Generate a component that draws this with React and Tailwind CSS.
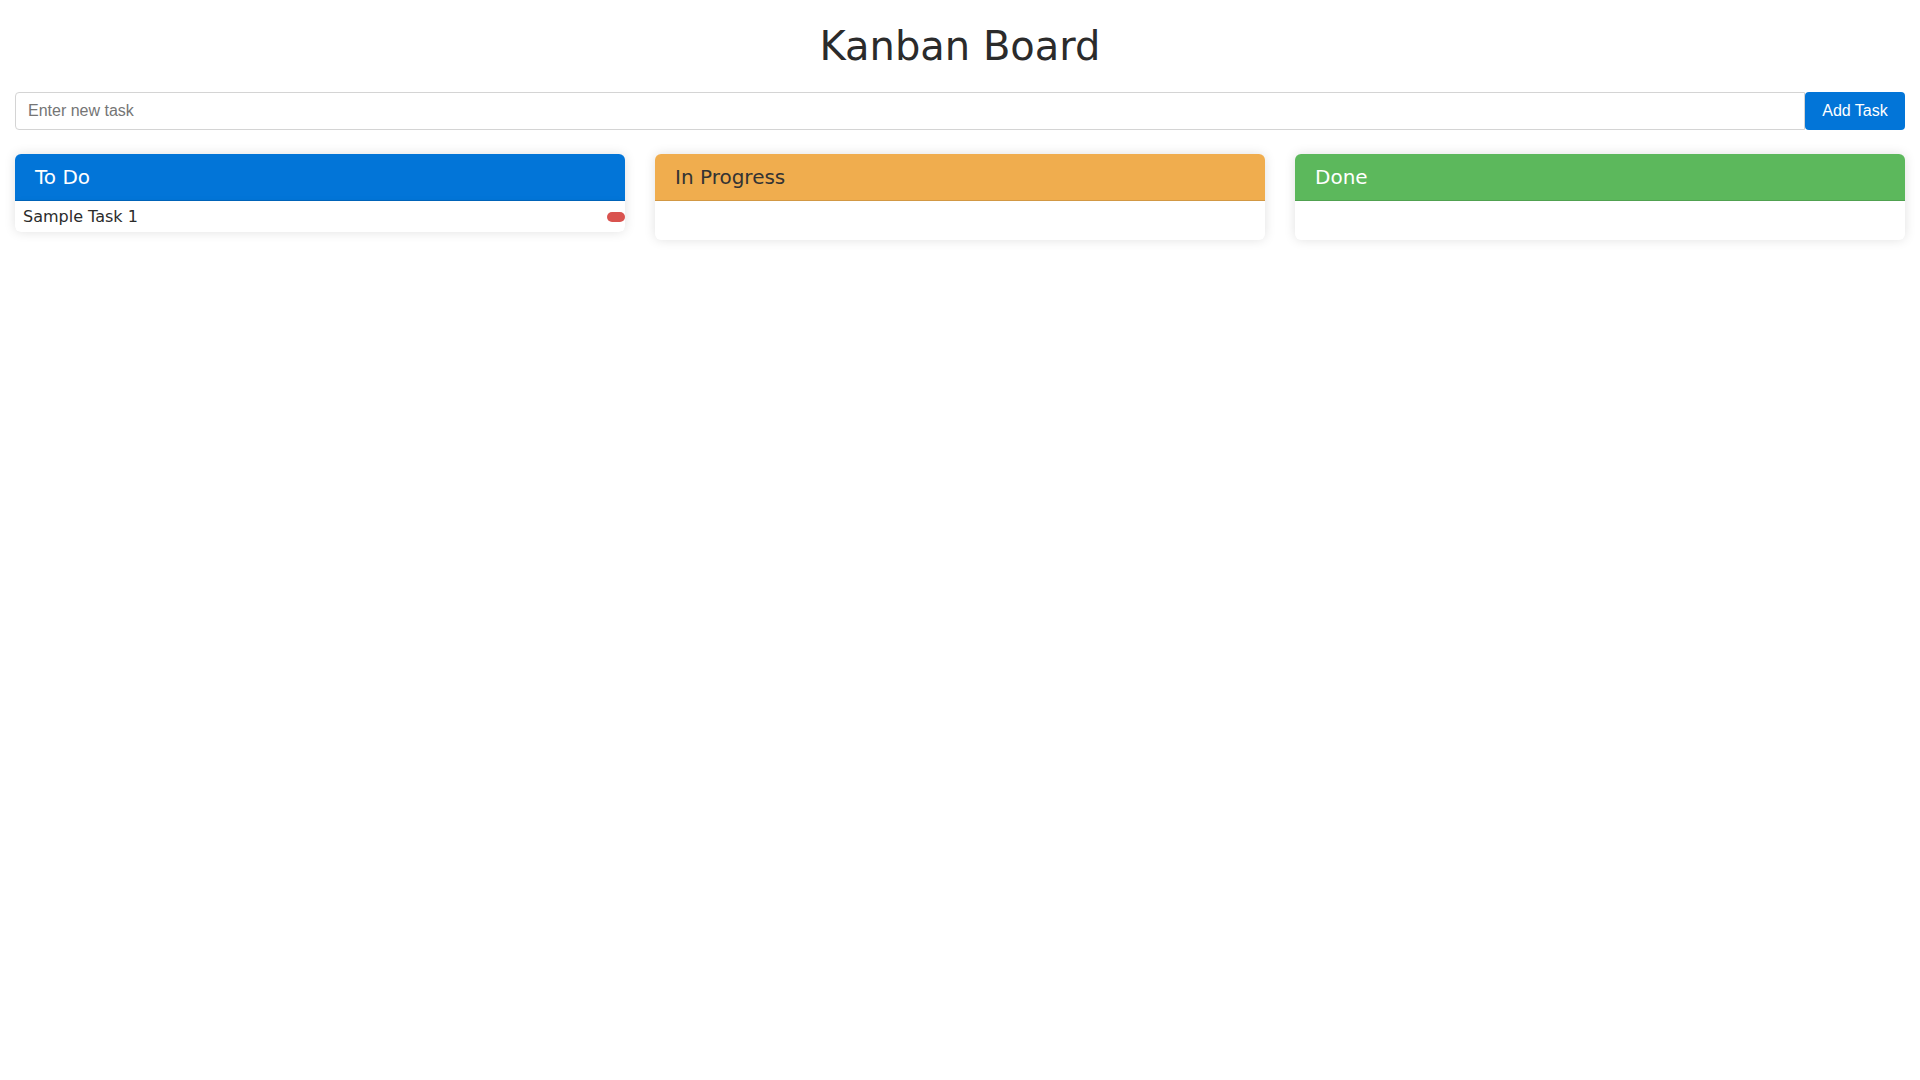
export default function App() {
  const columns = [
    { title: "To Do", bg: "bg-[#0275d8]", text: "text-white", tasks: ["Sample Task 1"] },
    { title: "In Progress", bg: "bg-[#f0ad4e]", text: "text-[#333333]", tasks: [] },
    { title: "Done", bg: "bg-[#5cb85c]", text: "text-white", tasks: [] },
  ];
  return (
    <div className="min-h-screen bg-white px-[15px] font-['DejaVu_Sans',sans-serif] text-[#333333]">
      <h1 className="pt-[22px] text-center text-[40px] leading-[48px] font-normal text-[#2b2b2b]">
        Kanban Board
      </h1>
      <div className="mt-[22px] flex h-[38px]">
        <input
          type="text"
          placeholder="Enter new task"
          className="h-full flex-1 rounded-l-[4px] border border-[#d4d4d4] px-[12px] font-['Liberation_Sans',Arial,sans-serif] text-[16px] text-[#333] outline-none placeholder:text-[#757575]"
        />
        <button className="h-full w-[100px] rounded-[4px] bg-[#0275d8] font-['Liberation_Sans',Arial,sans-serif] text-[16px] text-white">
          Add Task
        </button>
      </div>
      <div className="mt-[24px] grid grid-cols-3 items-start gap-[30px]">
        {columns.map((c) => (
          <div
            key={c.title}
            className="overflow-hidden rounded-[6px] bg-white shadow-[0_0_12px_rgba(0,0,0,0.12)]"
          >
            <div
              className={`flex h-[47px] items-center border-b border-[rgba(0,0,0,0.12)] px-[20px] text-[20px] ${c.bg} ${c.text}`}
            >
              {c.title}
            </div>
            {c.tasks.length === 0 ? (
              <div className="h-[39px]" />
            ) : (
              c.tasks.map((t) => (
                <div
                  key={t}
                  className="flex h-[31px] items-center justify-between bg-white pl-[8px] text-[16px] text-[#2b2b2b] shadow-[0_3px_8px_rgba(0,0,0,0.12)]"
                >
                  <span>{t}</span>
                  <button className="h-[10px] w-[18px] rounded-[5px] bg-[#d9534f]" />
                </div>
              ))
            )}
          </div>
        ))}
      </div>
    </div>
  );
}
